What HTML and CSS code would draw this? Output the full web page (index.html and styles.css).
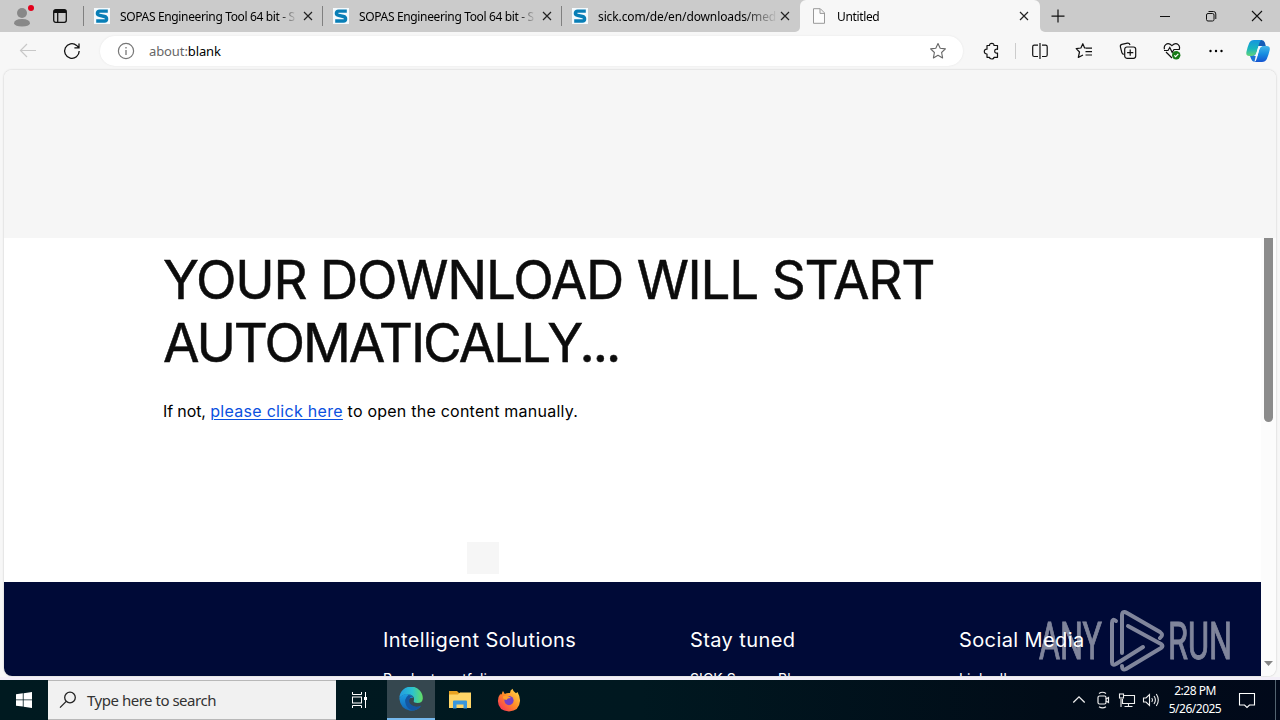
FILE: index.html
```html
<!DOCTYPE html>
<html lang="en">
<head>
<meta charset="utf-8">
<title>Untitled</title>
<link rel="stylesheet" href="styles.css">
</head>
<body>
<svg class="defs" width="0" height="0">
  <defs>
    <symbol id="close" viewBox="0 0 10 10"><path d="M1 1l8 8M9 1l-8 8" fill="none" stroke="#222" stroke-width="1.2"/></symbol>
    <symbol id="sick" viewBox="0 0 16 16"><rect width="16" height="16" fill="#f4fafd"/><path d="M13.8 3.1H5.6Q3.4 3.1 3.4 5.2Q3.4 7 5.6 7.3L10.5 8.5Q12.6 9 12.6 11Q12.6 13 10.4 13H2.2" fill="none" stroke="#087eb6" stroke-width="3.4"/></symbol>
    <linearGradient id="cpA" x1="0" y1="0" x2="0" y2="1"><stop offset="0" stop-color="#1695df"/><stop offset=".55" stop-color="#19b6bd"/><stop offset="1" stop-color="#63d477"/></linearGradient>
    <linearGradient id="cpB" x1="0" y1="0" x2="0" y2="1"><stop offset="0" stop-color="#43b6e9"/><stop offset=".5" stop-color="#168de1"/><stop offset="1" stop-color="#1554d1"/></linearGradient>
    <linearGradient id="edA" x1="0" y1="0" x2="1" y2="0"><stop offset="0" stop-color="#229be1"/><stop offset=".55" stop-color="#2bc2d0"/><stop offset="1" stop-color="#63de63"/></linearGradient>
    <linearGradient id="edB" x1="0" y1="0" x2="0" y2="1"><stop offset="0" stop-color="#1b9de2"/><stop offset="1" stop-color="#1264b5"/></linearGradient>
    <linearGradient id="ff" x1="1" y1="0" x2="0" y2="1"><stop offset="0" stop-color="#ffe34a"/><stop offset=".5" stop-color="#ff8a28"/><stop offset="1" stop-color="#f5225f"/></linearGradient>
  </defs>
</svg>

<header class="titlebar">
  <div class="profile">
    <svg width="26" height="26" viewBox="0 0 26 26"><circle cx="13" cy="10" r="5" fill="#888"/><path d="M5 20.5Q5 16 13 16T21 20.5Q20 23.5 13 23.5T5 20.5Z" fill="#888"/><circle cx="22" cy="5" r="3" fill="#e3001b"/></svg>
  </div>
  <div class="workspaces">
    <svg width="14" height="14" viewBox="0 0 14 14" fill="none" stroke="#111"><rect x=".7" y=".7" width="12.6" height="12.6" rx="2" stroke-width="1.3"/><path d="M1 2.5h12" stroke-width="3"/><path d="M4.7 3v10" stroke-width="1.3"/></svg>
  </div>
  <div class="tab"><svg class="fav"><use href="#sick"/></svg><span class="tab-title">SOPAS Engineering Tool 64 bit - S</span><svg class="x"><use href="#close"/></svg></div>
  <div class="tab"><svg class="fav"><use href="#sick"/></svg><span class="tab-title">SOPAS Engineering Tool 64 bit - S</span><svg class="x"><use href="#close"/></svg></div>
  <div class="tab last"><svg class="fav"><use href="#sick"/></svg><span class="tab-title url">sick.com/de/en/downloads/med</span><svg class="x"><use href="#close"/></svg></div>
  <div class="tab active">
    <svg class="fav" viewBox="0 0 16 16"><path d="M2.5.7h6.8l4.2 4.2v10.4h-11zM9 1v4.4h4.3" fill="#fcfcfc" stroke="#999"/></svg>
    <span class="tab-title">Untitled</span><svg class="x"><use href="#close"/></svg>
  </div>
  <div class="strip-end">
    <svg class="newtab" width="14" height="14" viewBox="0 0 14 14"><path d="M7 .5v13M.5 7.2h13" stroke="#111" stroke-width="1.2"/></svg>
    <svg width="12" height="12" viewBox="0 0 12 12"><path d="M1 6.5h10" stroke="#111"/></svg>
    <svg width="12" height="12" viewBox="0 0 12 12" fill="none" stroke="#111"><rect x="1.5" y="3.5" width="7.5" height="7.5" rx="1.5"/><path d="M3.5 1.5H8.5Q10.8 1.5 10.8 4V9"/></svg>
    <svg width="12" height="12" viewBox="0 0 12 12"><path d="M1 1l10 10M11 1L1 11" stroke="#111" stroke-width="1.1"/></svg>
  </div>
</header>

<nav class="toolbar">
  <div class="tool"><svg width="18" height="16" viewBox="0 0 18 16" fill="none" stroke="#c8c8c8" stroke-width="1.2"><path d="M17 7.5H1.5M8 1L1.5 7.5L8 14"/></svg></div>
  <div class="tool"><svg width="18" height="18" viewBox="0 0 18 18" fill="none" stroke="#111" stroke-width="1.3"><path d="M16.2 9A7.3 7.3 0 1 1 13.6 3.4L16 5.7M16 1.4V5.8H11.4"/></svg></div>
  <div class="address">
    <svg width="18" height="18" viewBox="0 0 18 18" fill="none" stroke="#777"><circle cx="9" cy="9" r="7.6" stroke-width="1.2"/><path d="M9 8v5M9 5v1.5" stroke-width="1.3"/></svg>
    <span class="url-text">about:<b>blank</b></span>
    <svg width="18" height="18" viewBox="0 0 18 18" fill="none" stroke="#666" stroke-width="1.1" stroke-linejoin="round"><path d="M9 1.5l2.2 4.8 5.2.6-3.8 3.6 1 5.4L9 13.3l-4.6 2.6 1-5.4L1.6 6.9l5.2-.6z"/></svg>
  </div>
  <div class="tool"><svg width="18" height="18" viewBox="-1 0 18 18" fill="none" stroke="#111" stroke-width="1.2" stroke-linejoin="round"><path d="M4 3.5H6.5Q6.5 1.3 8.8 1.3T11 3.5H14.5V7.3Q11.7 6.8 11.7 9.2T14.5 11V15.3H11Q11 17 8.8 17T6.5 15.3H4V12Q1.3 12 1.3 9.5T4 7.2Z"/></svg></div>
  <div class="tool-sep"></div>
  <div class="tool"><svg width="18" height="18" viewBox="0 0 18 18" fill="none" stroke="#111" stroke-width="1.2"><path d="M9 1v16M7 3.2H3.2Q1.7 3.2 1.7 4.7V13Q1.7 14.5 3.2 14.5H7M11 3.2H14.6Q16.2 3.2 16.2 4.7V13Q16.2 14.5 14.6 14.5H11"/></svg></div>
  <div class="tool"><svg width="18" height="18" viewBox="0 0 18 18" fill="none" stroke="#111" stroke-width="1.2" stroke-linejoin="round"><path d="M11.5 6H9.6L7.8 1.7 5.9 6 1.2 6.6 4.5 10 3.3 15.5 8 13M11 6.1h6M10.5 9.6H17M10.5 13H17"/></svg></div>
  <div class="tool"><svg width="18" height="18" viewBox="0 0 18 18" fill="none" stroke="#111" stroke-width="1.2"><path d="M4.8 12.3Q3.2 12 2.8 10.3L1.4 4.8Q1 2.8 2.8 2.3L8.4 1.1Q10.4.8 11 3"/><rect x="5.7" y="5" width="11" height="11.3" rx="2.2"/><path d="M11.2 7.6v6.2M8.1 10.7h6.2"/></svg></div>
  <div class="tool"><svg width="18" height="18" viewBox="0 0 18 18" fill="none" stroke="#111" stroke-width="1.2"><path d="M1.5 7.2Q.6 4.4 2.7 2.6Q5.5.4 8.9 3.6Q12.4.4 15.2 2.6Q17.2 4.4 16.3 7.2M3 10l6 6M1 8.5H5L6.8 5.5 9.2 10.4 11 7.5H16.8"/><circle cx="13.2" cy="13.2" r="4.2" fill="#177b17" stroke="none"/><path d="M11.3 13.3l1.3 1.3 2.7-2.8" stroke="#fff"/></svg></div>
  <div class="tool"><svg width="16" height="4" viewBox="0 0 16 4"><circle cx="2.5" cy="2" r="1.2"/><circle cx="8" cy="2" r="1.2"/><circle cx="13.5" cy="2" r="1.2"/></svg></div>
  <div class="tool copilot"><svg width="24" height="24" viewBox="0 0 24 24"><path d="M10 1H15.5Q18 1 18.8 3.5L19.8 7H12Z" fill="#155cb7"/><path d="M8 1H15.5Q13.8 2 13 5L10.6 13.5Q9.4 17 6 17H3.2Q-.3 17 .4 13Q1.8 7 3.2 4Q4.6 1 8 1Z" fill="url(#cpA)"/><path d="M16.5 7H20.8Q24.4 7 23.7 11Q22.3 17 20.8 20Q19.4 23 16 23H8.5Q10.2 22 11 19L13.2 10.5Q14.2 7 16.5 7Z" fill="url(#cpB)"/><path d="M4 17H6Q9 17 10.4 14.2L9.4 18.5Q8.8 21 8.5 23Q6 22.5 5.2 20Z" fill="#1b74d6"/><path d="M13.8 7H16.5Q14.2 7.4 13.2 10.8L11.4 17H7.6Q9.7 16.3 10.6 13.6L12 9Q12.6 7 13.8 7Z" fill="#f7fbff"/></svg></div>
</nav>

<main class="viewport">
  <div class="placeholder"></div>
  <div class="scroll-area">
    <div class="document">
      <section class="message">
        <h1>YOUR DOWNLOAD WILL START<br><span class="second">AUTOMATICALLY...</span></h1>
        <p><span class="lead">If not, </span><a href="#">please click here</a><span class="tail"> to open the content manually.</span></p>
        <div class="loader"></div>
      </section>
      <footer class="footer">
        <div><h2>Intelligent Solutions</h2><span class="link">Product portfolio</span></div>
        <div><h2>Stay tuned</h2><span class="link">SICK Sensor Blog</span></div>
        <div><h2>Social Media</h2><span class="link">LinkedIn</span></div>
      </footer>
    </div>
    <div class="scrollbar"><div class="thumb"></div><svg width="9" height="5" viewBox="0 0 9 5"><path d="M0 0h9L4.5 5z" fill="#858585"/></svg></div>
  </div>
</main>

<svg class="watermark" width="196" height="66" viewBox="0 0 196 66">
  <g fill="#fff" stroke="#fff" stroke-width="1" font-family="Roboto, sans-serif" font-size="52">
    <text x="2" y="51" textLength="63" lengthAdjust="spacingAndGlyphs">ANY</text>
    <text x="131" y="51" textLength="64" lengthAdjust="spacingAndGlyphs">RUN</text>
  </g>
  <g fill="none" stroke="#fff" stroke-width="4" stroke-linejoin="round" stroke-linecap="round">
    <path d="M79 13Q75 10 75 15V54Q75 58 79 56L106 39"/>
    <path d="M85 45V8Q85 2 90 5L123 24Q127 27 123 30"/>
    <path d="M91 18L124 36Q127 38 124 40L89 61Q85 63 85 58"/>
  </g>
</svg>

<div class="taskbar">
  <div class="start"><svg width="16" height="16" viewBox="0 0 16 16" fill="#fff"><path d="M0 2.2L6.8 1.3V7.5H0zM7.6 1.2L16 0V7.5H7.6zM0 8.3H6.8V14.6L0 13.7zM7.6 8.3H16V16L7.6 14.7z"/></svg></div>
  <div class="search">
    <svg width="18" height="18" viewBox="0 0 18 18" fill="none" stroke="#222" stroke-width="1.3"><circle cx="11" cy="6.5" r="5.3"/><path d="M7.2 10.4L1 16.6"/></svg>
    <span>Type here to search</span>
  </div>
  <div class="app taskview"><svg width="18" height="16" viewBox="0 0 18 16" fill="none" stroke="#fff"><path d="M1.5 0V2.5H10.5V0M1.5 16V13.5H10.5V16M14.5 0V16"/><rect x="1.5" y="5" width="9" height="6"/><path d="M13 6.5h3" stroke-width="3"/></svg></div>
  <div class="app current"><svg width="24" height="24" viewBox="0 0 24 24"><path d="M.4 11A11.7 11.7 0 0 1 23.8 11.5Q23.5 16 18.5 16Q14 16 14.8 13.7Q16 9 11 7.5Q4 6 .4 11Z" fill="url(#edA)"/><path d="M.3 11.5Q4 5.5 10.5 7.5Q13.5 8.5 14.2 10.8Q10.5 10 9.6 13Q9.5 19.5 17 20Q20 20 22 18.7Q18 24.5 11 23.7Q1.5 22 .3 11.5Z" fill="url(#edB)"/><path d="M9.5 8Q4.5 12 7 18Q9 23 14 23.3Q19 23 22 18.7Q17 21 13 18.3Q8.5 15.5 11 11Q12 9.4 13.8 10Q12.6 8 9.5 8Z" fill="#1456a1"/></svg></div>
  <div class="app explorer"><svg width="22" height="20" viewBox="0 0 22 20"><path d="M0 1H8L10 3H20V18H0Z" fill="#e9a321"/><path d="M0 4.5H9L11 2.5H22V18H0Z" fill="#ffd567"/><path d="M4 18.5V11.5Q4 10.5 5 10.5H17Q18 10.5 18 11.5V18.5H14.5V14.5H7.5V18.5Z" fill="#3a97dc"/></svg></div>
  <div class="app firefox"><svg width="24" height="24" viewBox="0 0 24 24"><path d="M5 5.5Q5 4 6 3L7.8 6Q10 4.5 13 5Q13 2 15.5.7Q16 3.4 19 5.3L20.5 4Q23.3 9 23 13Q22.4 23 12 23.4Q1.3 23 .9 13Q1 8.5 3.5 5.5L3.8 7Z" fill="url(#ff)"/><circle cx="12" cy="12.6" r="4.6" fill="#7440c8"/><path d="M5.8 8.5Q9 7 12 8.5L14 10Q10.5 10 9.5 12Q6 11.5 5.8 8.5Z" fill="#ffa02c"/></svg></div>
  <div class="tray">
    <svg width="24" height="20" viewBox="0 0 24 20" fill="none" stroke="#eee" stroke-width="1.3"><path d="M6.3 12.5L12 6.8l5.7 5.7"/></svg>
    <svg width="24" height="20" viewBox="0 0 24 20" fill="none" stroke="#eee" stroke-width="1.2"><rect x="7" y="6" width="8" height="8" rx="1.5"/><path d="M15 9l2.5-1.5v5L15 11M8 3.5Q11.5 1 15 3.5M8 16.8Q11.5 19 15 16.8"/></svg>
    <svg width="24" height="20" viewBox="0 0 24 20" fill="none" stroke="#eee" stroke-width="1.1"><path d="M9 5.5H19.5V13.5H7.5V9M13.5 13.5V16.5M9.5 16.5H17.5M6 9V17"/><rect x="4.5" y="4" width="4" height="4"/></svg>
    <svg width="24" height="20" viewBox="0 0 24 20" fill="none" stroke="#eee" stroke-width="1.1"><path d="M4.5 8H7L10.5 4.5V15.5L7 12H4.5ZM12.8 8Q14.3 10 12.8 12M15 6Q17.8 10 15 14M17.3 4Q21.3 10 17.3 16"/></svg>
  </div>
  <div class="clock"><span class="time">2:28 PM</span><span class="date">5/26/2025</span></div>
  <div class="notice"><svg width="18" height="18" viewBox="0 0 18 18" fill="none" stroke="#fff" stroke-width="1.1"><path d="M1.5 2.5H16.5V14H11.5L9 16.5 6.5 14H1.5Z"/></svg></div>
  <div class="peek"></div>
</div>
</body>
</html>
```
FILE: styles.css
```css
* { box-sizing: border-box; }
body {
  margin: 0; width: 1280px; height: 720px; overflow: hidden; position: relative;
  display: flex; flex-direction: column; background: #f7f7f7;
  font-family: "Noto Sans", sans-serif; color: #000;
}
svg { display: block; flex: none; }
.defs { position: absolute; }

.titlebar { flex: none; height: 32px; display: flex; background: #f7f7f7; }
.profile { width: 44px; padding: 3px 0 0 9px; }
.workspaces { width: 40px; padding: 9px 0 0 9px; }
.profile, .workspaces, .tab { flex: none; background-color: #cbcbcb; }
.workspaces, .tab {
  background-image: linear-gradient(#808080, #808080);
  background-size: 1px 20px; background-position: right 6px; background-repeat: no-repeat;
}
.tab { width: 239px; display: flex; align-items: center; padding: 0 10px; font-size: 12px; }
.fav { width: 16px; height: 16px; margin-right: 10px; }
.x { width: 10px; height: 10px; }
.tab-title {
  width: 180px; margin-right: 3px; white-space: nowrap; overflow: hidden; letter-spacing: -0.35px;
  -webkit-mask-image: linear-gradient(90deg, #000 158px, transparent 177px);
  mask-image: linear-gradient(90deg, #000 158px, transparent 177px);
}
.tab-title.url {
  letter-spacing: -0.12px;
  -webkit-mask-image: linear-gradient(90deg, #000 145px, transparent 180px);
  mask-image: linear-gradient(90deg, #000 145px, transparent 180px);
}
.tab.last { width: 238px; background-image: none; border-radius: 0 0 5px 0; }
.tab.active { width: 240px; background: #f7f7f7; padding-left: 11px; box-shadow: 0 -6px #cbcbcb; border-radius: 6px 6px 0 0; }
.tab.active .tab-title { width: 179px; }
.strip-end {
  flex: 1; display: flex; gap: 34px; align-items: center; padding: 0 17px 0 11px;
  background: #cbcbcb; border-radius: 0 0 0 5px;
}
.newtab { margin-right: auto; }

.toolbar { flex: none; height: 38px; display: flex; align-items: center; padding-left: 6px; }
.tool { width: 44px; height: 30px; flex: none; display: flex; align-items: center; justify-content: center; }
.tool.copilot { width: 40px; }
.tool-sep { width: 1px; height: 16px; margin: 0 2px; background: #ccc; flex: none; }
.address {
  width: 863px; height: 30px; margin: 0 6px; padding: 0 16px 0 17px; flex: none;
  display: flex; align-items: center; border-radius: 15px; background: #fff; box-shadow: 0 0 2px #e3e3e3;
}
.url-text { flex: 1; margin-left: 14px; font-size: 13px; color: #666; letter-spacing: -0.1px; }
.url-text b { color: #000; font-weight: 400; }

.viewport {
  flex: none; width: 1272px; height: 606px; margin: 0 4px; overflow: hidden;
  border-radius: 8px; background: #fff; box-shadow: 0 0 2px #bbb; display: flex; flex-direction: column;
}
.placeholder { flex: none; height: 168px; background: #f6f6f6; }
.scroll-area { flex: 1; display: flex; min-height: 0; }
.document { width: 1257px; font-family: Inter, sans-serif; }
.message { height: 344px; padding: 11px 0 0 159px; }
h1 {
  margin: 0; font-size: 53px; line-height: 63px; font-weight: 400; color: #0c0c0c;
  white-space: nowrap; letter-spacing: -1.24px; -webkit-text-stroke: 0.5px #0c0c0c;
}
.second { letter-spacing: -2.05px; }
.message p { margin: 24px 0 0; font-size: 16px; line-height: 24px; white-space: pre; letter-spacing: 0.3px; }
.message .lead { letter-spacing: -0.12px; }
.message .tail { letter-spacing: 0.23px; }
.message a { color: #0b50e0; text-underline-offset: 2px; }
.loader { width: 32px; height: 32px; margin: 119px 0 0 304px; background: #f6f6f6; }
.footer {
  height: 94px; padding: 45px 0 0 379px; overflow: hidden; background: #000a37; color: #fff;
  display: grid; grid-template-columns: 307px 269px 1fr; white-space: nowrap;
}
.footer h2 { margin: 0 0 12px; font-size: 20px; line-height: 26px; font-weight: 400; letter-spacing: 0.4px; }
.link { display: block; font-size: 14px; line-height: 28px; letter-spacing: 0.1px; }
.scrollbar { width: 15px; background: #fcfcfc; display: flex; flex-direction: column; align-items: center; justify-content: space-between; padding-bottom: 10px; }
.thumb { width: 9px; height: 184px; background: #8b8b8b; border-radius: 0 0 5px 5px; }
.watermark { position: absolute; left: 1037px; top: 608px; opacity: 0.5; }

.taskbar {
  flex: none; height: 40px; margin-top: 4px; display: flex; color: #fff;
  background: linear-gradient(90deg, #001a20, #001820 50%, #010c18 82%, #01091a);
  box-shadow: 0 -3px #f3eff8;
}
.start { width: 48px; display: flex; align-items: center; justify-content: center; }
.search {
  width: 288px; display: flex; align-items: center; padding-left: 11px; gap: 10px; background: #f1f1f1;
  border: 1px solid #b8b8b8; border-width: 1px 0; color: #333; font-size: 15px; letter-spacing: -0.48px;
}
.search span { white-space: nowrap; }
.app { width: 48px; display: flex; align-items: center; justify-content: center; }
.current { margin-left: 3px; background: #35474f; border-bottom: 2px solid #76b9ed; }
.explorer { padding-left: 2px; }
.firefox { padding-left: 4px; }
.tray { display: flex; align-items: center; margin-left: auto; }
.clock { width: 64px; display: flex; flex-direction: column; align-items: center; font-size: 12px; line-height: 18px; padding-top: 2px; white-space: nowrap; letter-spacing: -0.5px; }
.notice { width: 40px; display: flex; align-items: center; justify-content: center; }
.peek { width: 5px; margin-left: 8px; border-left: 1px solid #536370; }
```
